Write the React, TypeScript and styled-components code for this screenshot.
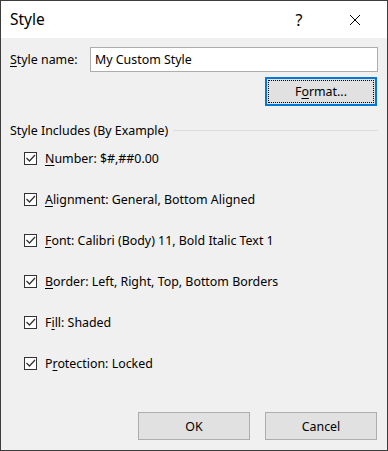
import React from "react";
import styled, { createGlobalStyle } from "styled-components";

const GlobalStyle = createGlobalStyle`
  html, body {
    margin: 0;
    padding: 0;
    background: #ffffff;
  }
  * {
    box-sizing: border-box;
  }
`;

const Window = styled.div`
  width: 388px;
  height: 451px;
  border: 1px solid #3c3c3c;
  background: #f0f0f0;
  display: flex;
  flex-direction: column;
  font-family: "Noto Sans", "Open Sans", sans-serif;
  font-size: 12.4px;
  color: #000;
`;

const TitleBar = styled.div`
  height: 37px;
  background: #ffffff;
  display: flex;
  align-items: center;
  padding-left: 9px;
  padding-right: 4px;
`;

const Title = styled.div`
  flex: 1;
  font-size: 15.5px;
  margin-top: -1px;
`;

const TitleButton = styled.div`
  width: 56px;
  height: 37px;
  display: flex;
  align-items: center;
  justify-content: center;
  font-size: 16px;
`;

const Content = styled.div`
  flex: 1;
  display: flex;
  flex-direction: column;
  padding: 9px 9px 10px 9px;
`;

const NameRow = styled.div`
  display: flex;
  align-items: center;
`;

const Label = styled.label`
  width: 80px;
`;

const Input = styled.div`
  flex: 1;
  height: 25px;
  border: 1px solid #acacac;
  background: #ffffff;
  display: flex;
  align-items: center;
  padding-left: 4px;
`;

const FormatRow = styled.div`
  display: flex;
  justify-content: flex-end;
  margin-top: 5px;
  padding-right: 1px;
`;

const Button = styled.div<{ $focused?: boolean }>`
  width: 112px;
  height: ${(p) => (p.$focused ? 29 : 28)}px;
  background: #e1e1e1;
  border: ${(p) => (p.$focused ? "2px solid #0078d7" : "1px solid #adadad")};
  display: flex;
  align-items: center;
  justify-content: center;
  position: relative;
`;

const FocusRing = styled.div`
  position: absolute;
  inset: 1px;
  border: 1px dotted #000;
`;

const GroupHeader = styled.div`
  display: flex;
  align-items: center;
  margin-top: 16px;
  height: 16px;
`;

const GroupLine = styled.div`
  flex: 1;
  height: 1px;
  background: #dcdcdc;
  margin-left: 5px;
`;

const List = styled.div`
  display: flex;
  flex-direction: column;
  gap: 25px;
  margin-top: 12px;
  padding-left: 14px;
`;

const Item = styled.div`
  display: flex;
  align-items: center;
  height: 16px;
  gap: 8px;
`;

const Box = styled.div`
  width: 13px;
  height: 13px;
  border: 1px solid #333333;
  background: #ffffff;
  display: flex;
  align-items: center;
  justify-content: center;
`;

const Footer = styled.div`
  margin-top: auto;
  display: flex;
  justify-content: flex-end;
  gap: 15px;
  padding-right: 1px;
`;

const Key = styled.span`
  text-decoration: underline;
  text-underline-offset: 2px;
`;

const Check = () => (
  <svg width="11" height="11" viewBox="0 0 11 11">
    <path d="M1.5 5 L4.5 8 L10 2" fill="none" stroke="#333" strokeWidth="1.3" />
  </svg>
);

const items: [string, string, string][] = [
  ["", "N", "umber: $#,##0.00"],
  ["", "A", "lignment: General, Bottom Aligned"],
  ["", "F", "ont: Calibri (Body) 11, Bold Italic Text 1"],
  ["", "B", "order: Left, Right, Top, Bottom Borders"],
  ["F", "i", "ll: Shaded"],
  ["P", "r", "otection: Locked"],
];

export default function App() {
  return (
    <>
      <GlobalStyle />
      <Window>
        <TitleBar>
          <Title>Style</Title>
          <TitleButton>?</TitleButton>
          <TitleButton>
            <svg width="12" height="12" viewBox="0 0 12 12">
              <path d="M1 1 L11 11 M11 1 L1 11" stroke="#000" strokeWidth="1" />
            </svg>
          </TitleButton>
        </TitleBar>
        <Content>
          <NameRow>
            <Label>
              <Key>S</Key>tyle name:
            </Label>
            <Input>My Custom Style</Input>
          </NameRow>
          <FormatRow>
            <Button $focused>
              <FocusRing />
              <span>
                F<Key>o</Key>rmat...
              </span>
            </Button>
          </FormatRow>
          <GroupHeader>
            <span>Style Includes (By Example)</span>
            <GroupLine />
          </GroupHeader>
          <List>
            {items.map(([pre, key, rest]) => (
              <Item key={key + rest}>
                <Box>
                  <Check />
                </Box>
                <span>
                  {pre}
                  <Key>{key}</Key>
                  {rest}
                </span>
              </Item>
            ))}
          </List>
          <Footer>
            <Button>OK</Button>
            <Button>Cancel</Button>
          </Footer>
        </Content>
      </Window>
    </>
  );
}
